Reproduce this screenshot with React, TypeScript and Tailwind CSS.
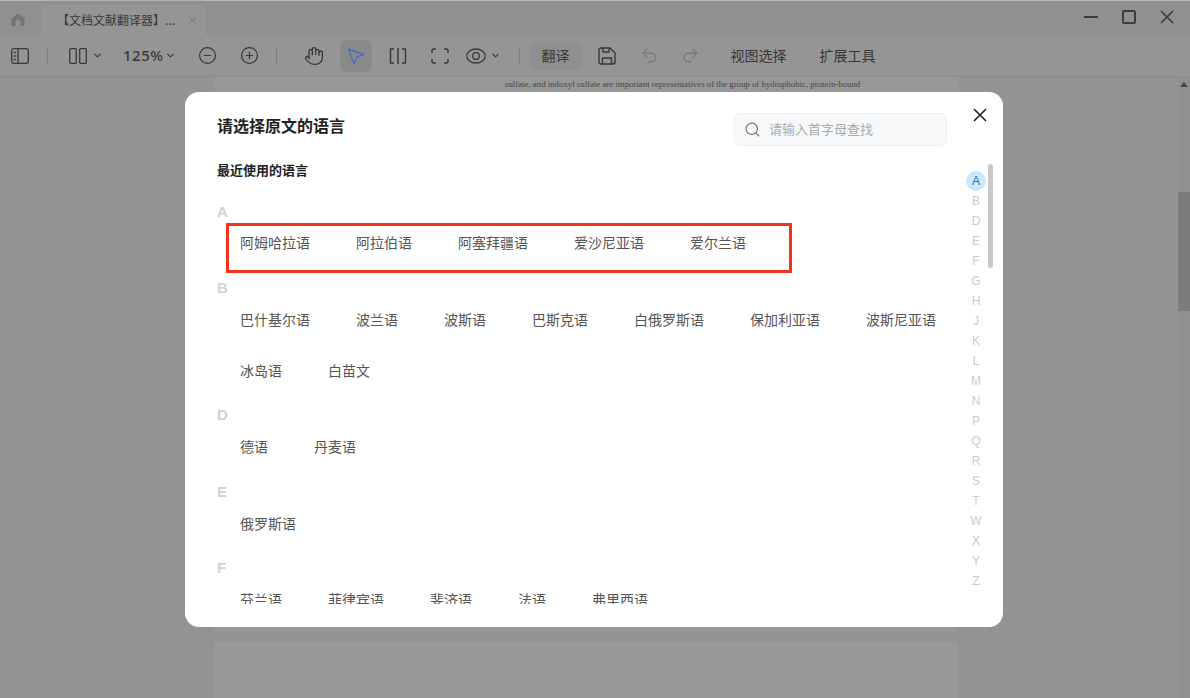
import React from 'react';
import { ChevronDown, CircleMinus, CirclePlus, Hand, Search, Undo2, Redo2 } from 'lucide-react';

const cjk = { fontFamily: '"Noto Sans CJK SC", "Liberation Sans", sans-serif' };

const sections = [
  { letter: 'A', items: ['阿姆哈拉语', '阿拉伯语', '阿塞拜疆语', '爱沙尼亚语', '爱尔兰语'] },
  { letter: 'B', items: ['巴什基尔语', '波兰语', '波斯语', '巴斯克语', '白俄罗斯语', '保加利亚语', '波斯尼亚语', '冰岛语', '白苗文'] },
  { letter: 'D', items: ['德语', '丹麦语'] },
  { letter: 'E', items: ['俄罗斯语'] },
  { letter: 'F', items: ['芬兰语', '菲律宾语', '斐济语', '法语', '弗里西语'] },
];

const letters = ['A', 'B', 'D', 'E', 'F', 'G', 'H', 'J', 'K', 'L', 'M', 'N', 'P', 'Q', 'R', 'S', 'T', 'W', 'X', 'Y', 'Z'];

function Divider({ className }: { className: string }) {
  return <div className={`w-px h-[18px] bg-[#7c7d7d] ${className}`} />;
}

function Cross({ className, width = 1.6 }: { className: string; width?: number }) {
  return (
    <svg viewBox="0 0 14 14" className={className} fill="none" stroke="currentColor" strokeWidth={width}>
      <path d="M1 1L13 13M13 1L1 13" />
    </svg>
  );
}

function Toolbar() {
  return (
    <div className="h-[42px] flex items-center pl-[11px] bg-[#959595] border-b border-[#8c8c8c] text-[#383838] shrink-0">
      <svg viewBox="0 0 18 16" className="w-[18px] h-4" fill="none" stroke="currentColor" strokeWidth="1.3">
        <rect x="0.7" y="0.7" width="16.6" height="14.6" rx="2" />
        <path d="M7 1v14M2.8 4.5h2M2.8 8h2M2.8 11.5h2" />
      </svg>
      <Divider className="ml-[18px]" />
      <svg viewBox="0 0 18 16" className="ml-[21px] w-[18px] h-4" fill="none" stroke="currentColor" strokeWidth="1.3">
        <rect x="0.7" y="0.7" width="6.6" height="14.6" rx="1" />
        <rect x="10.7" y="0.7" width="6.6" height="14.6" rx="1" />
      </svg>
      <ChevronDown className="ml-[5px] w-[11px] h-[11px]" strokeWidth={2.5} />
      <span className="ml-[20px] text-[15px] font-medium tracking-[0.5px]" style={{ fontFamily: '"Noto Sans", sans-serif' }}>125%</span>
      <ChevronDown className="ml-[1px] w-[11px] h-[11px]" strokeWidth={2.5} />
      <CircleMinus className="ml-[22px] w-[19px] h-[19px]" strokeWidth={1.5} />
      <CirclePlus className="ml-[23px] w-[19px] h-[19px]" strokeWidth={1.5} />
      <Divider className="ml-[17px]" />
      <Hand className="ml-[27px] w-5 h-5" strokeWidth={1.6} />
      <div className="ml-4 w-8 h-8 rounded-md bg-[#8a8a8c] flex items-center justify-center">
        <svg viewBox="0 0 20 20" className="w-5 h-5" fill="none" stroke="#4a6fb5" strokeWidth="1.4" strokeLinejoin="round">
          <path d="M2.5 3 L18 8.5 L11 11 L8 18 Z" />
        </svg>
      </div>
      <svg viewBox="0 0 18 16" className="ml-[17px] w-[18px] h-4" fill="none" stroke="currentColor" strokeWidth="1.4">
        <path d="M5 1H1.5v14H5M13 1h3.5v14H13M9 0v16" />
      </svg>
      <svg viewBox="0 0 18 16" className="ml-6 w-[18px] h-4" fill="none" stroke="currentColor" strokeWidth="1.5">
        <path d="M1 5V2.5A1.5 1.5 0 0 1 2.5 1H5M13 1h2.5A1.5 1.5 0 0 1 17 2.5V5M17 11v2.500A1.5 1.5 0 0 1 15.500 15H13M5 15H2.500A1.500 1.500 0 0 1 1 13.500V11" />
      </svg>
      <svg viewBox="0 0 20 16" className="ml-[17px] w-5 h-4" fill="none" stroke="currentColor" strokeWidth="1.3">
        <ellipse cx="10" cy="8" rx="9.300" ry="7" />
        <circle cx="10" cy="8" r="3.300" />
      </svg>
      <ChevronDown className="ml-1 w-[11px] h-[11px]" strokeWidth={2.5} />
      <Divider className="ml-[18px]" />
      <div className="ml-[10px] w-[52px] h-[29px] pb-[2px] rounded-md bg-[#8e8f90] flex items-center justify-center text-sm" style={cjk}>翻译</div>
      <svg viewBox="0 0 18 18" className="ml-4 w-[18px] h-[18px]" fill="none" stroke="currentColor" strokeWidth="1.4" strokeLinejoin="round">
        <path d="M1 3a2 2 0 0 1 2-2h9l5 5v9a2 2 0 0 1-2 2H3a2 2 0 0 1-2-2z" />
        <path d="M5 1v4h6V1M4.500 17v-6h9v6" />
      </svg>
      <Undo2 className="ml-[24px] w-[19px] h-[19px] text-[#767676]" strokeWidth={1.4} />
      <Redo2 className="ml-[22px] w-[19px] h-[19px] text-[#767676]" strokeWidth={1.4} />
      <span className="ml-[31px] pb-[2px] text-sm" style={cjk}>视图选择</span>
      <span className="ml-[33px] pb-[2px] text-sm" style={cjk}>扩展工具</span>
    </div>
  );
}

function LanguageDialog() {
  return (
    <div className="relative w-[818px] h-[535px] bg-white rounded-[14px] flex flex-col overflow-hidden" style={cjk}>
      <div className="flex items-start justify-between pl-8 pr-14 pt-[21px] h-[68px] shrink-0">
        <h2 className="text-base leading-6 font-bold text-[#222]">请选择原文的语言</h2>
        <div className="w-[213px] h-[33px] pb-[2px] rounded-md bg-[#f7f8fa] border border-[#eeeff2] flex items-center pl-[9px]">
          <Search className="mt-[2px] w-[17px] h-[17px] text-[#6b6f75]" strokeWidth={1.6} />
          <span className="ml-[8px] text-[13px] text-[#a7abb1]">请输入首字母查找</span>
        </div>
      </div>
      <button className="absolute right-[16px] top-[16px] text-[#222]">
        <Cross className="w-[14px] h-[14px]" />
      </button>

      <div className="flex flex-1 min-h-0">
        <div className="flex-1 min-w-0 pl-8 h-[444px] overflow-hidden">
          <div className="text-[13px] font-bold text-[#222] leading-5 mb-[21.500px]">最近使用的语言</div>
          {sections.map((section) => (
            <div key={section.letter} className="mb-[10px]">
              <div className="h-4 leading-5 text-[15px] font-bold text-[#cfd2d6]" style={{ fontFamily: '"Liberation Sans", sans-serif' }}>{section.letter}</div>
              <div className="flex flex-wrap gap-x-[46px] pl-[23px]">
                {section.items.map((item) => (
                  <div key={item} className={`h-[50.500px] text-sm leading-5 text-[#555] ${section.letter === 'A' ? 'pt-[14px]' : 'pt-[15px]'}`}>{item}</div>
                ))}
              </div>
            </div>
          ))}
        </div>
        <div className="w-5 flex flex-col items-center mt-[11px] shrink-0" style={{ fontFamily: '"Liberation Sans", sans-serif' }}>
          {letters.map((l, i) => (
            <div
              key={l}
              className={i === 0
                ? 'w-5 h-5 rounded-full bg-[#cce8fb] text-[#2a72c0] text-xs flex items-center justify-center'
                : 'w-5 h-5 text-[#c9ccd0] text-xs flex items-center justify-center'}
            >
              {l}
            </div>
          ))}
        </div>
        <div className="w-[5px] h-[104px] mt-[4px] ml-[2px] mr-[10px] rounded-full bg-[#c9c9c9] shrink-0" />
      </div>

      {/* red annotation box */}
      <div className="absolute left-[41px] top-[131px] w-[566px] h-[50px] border-[3px] border-[#f0341a]" />
    </div>
  );
}

export default function App() {
  return (
    <div className="relative w-[1190px] h-[698px] overflow-hidden flex flex-col bg-[#929395] border-t border-[#b4b4b4]" style={cjk}>
      <div className="h-[34px] bg-[#8f9092] flex items-end shrink-0 text-[#383838]">
        <div className="w-[41px] h-[30px] flex items-center justify-center pr-[5px]">
          <svg viewBox="0 0 14 14" className="w-[14px] h-[14px]" fill="#737476">
            <path d="M7 0.500 L13.500 5.500 V13 H9.500 V9 A2.500 2.500 0 0 0 4.500 9 V13 H0.500 V5.500 Z" />
          </svg>
        </div>
        <div className="w-[164px] h-[30px] bg-[#959595] flex items-center pl-[16px] text-xs relative">
          <span>【文档文献翻译器】...</span>
          <Cross className="absolute right-[9px] w-[7px] h-[7px] text-[#6d6d6d]" width={2} />
        </div>
        <div className="flex-1" />
        <div className="flex items-center h-[34px] pb-[2px] pr-[16px] gap-[24px] text-[#3d3d3d]">
          <div className="w-[14px] h-[2px] bg-[#3d3d3d]" />
          <div className="w-[14px] h-[14px] border-[2px] border-[#3d3d3d] rounded-[2px]" />
          <Cross className="w-[14px] h-[14px]" />
        </div>
      </div>

      <Toolbar />

      <div className="flex-1 flex min-h-0">
        <div className="flex-1 pl-[214px] overflow-hidden">
          <div className="w-[744px] h-[555px] bg-[#989898] mb-[10px] pt-[2px] pl-[291px]">
            <div className="text-[8.800px] leading-[10px] text-[#474747] whitespace-nowrap" style={{ fontFamily: '"Liberation Serif", serif' }}>
              sulfate, and indoxyl sulfate are important representatives of the group of hydrophobic, protein-bound
            </div>
          </div>
          <div className="w-[744px] h-[200px] bg-[#989898]" />
        </div>
        <div className="w-3 bg-[#909090] flex flex-col items-center pt-[5px] shrink-0">
          <div className="w-0 h-0 border-x-[4px] border-x-transparent border-b-[5px] border-b-[#444]" />
          <div className="w-3 h-[119px] mt-[105px] bg-[#7c7c7c]" />
        </div>
      </div>

      <div className="absolute left-0 top-0 right-0 flex justify-center pt-[91px] pr-[2px]">
        <LanguageDialog />
      </div>
    </div>
  );
}
